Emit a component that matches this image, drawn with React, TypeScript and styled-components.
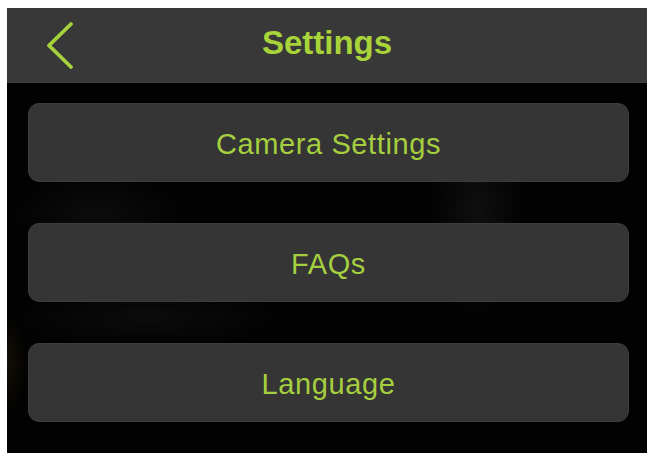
import React from 'react';
import styled, { createGlobalStyle } from 'styled-components';

const items = ['Camera Settings', 'FAQs', 'Language'];

const App = () => {
  return (
    <>
      <GlobalStyle />
      <Screen>
        <Header>
          <BackButton type="button" aria-label="Back">
            <svg width="30" height="48" viewBox="0 0 30 48" fill="none">
              <path
                d="M26 3 L4 24.5 L26 46"
                stroke="#a6d23c"
                strokeWidth="3.8"
                strokeLinecap="round"
                strokeLinejoin="round"
              />
            </svg>
          </BackButton>
          <Title>Settings</Title>
        </Header>
        <Content>
          {items.map((item) => (
            <MenuButton key={item} type="button">
              {item}
            </MenuButton>
          ))}
        </Content>
      </Screen>
    </>
  );
};

const GlobalStyle = createGlobalStyle`
  body {
    margin: 0;
    background: #ffffff;
    font-family: 'Liberation Sans', Arial, sans-serif;
  }
`;

const Screen = styled.div`
  margin: 8px 0 0 7px;
  width: 640px;
  height: 445px;
  display: flex;
  flex-direction: column;
  background:
    radial-gradient(ellipse 20px 50px at 0px 355px, rgba(90, 70, 20, 0.2), transparent),
    radial-gradient(ellipse 140px 30px at 140px 310px, rgba(255, 255, 255, 0.04), transparent),
    radial-gradient(ellipse 50px 110px at 470px 205px, rgba(255, 255, 255, 0.05), transparent),
    radial-gradient(ellipse 90px 40px at 90px 205px, rgba(255, 255, 255, 0.04), transparent),
    #020202;
  overflow: hidden;
`;

const Header = styled.header`
  position: relative;
  height: 74px;
  flex-shrink: 0;
  background: #383838;
  border-bottom: 1px solid #3f3f3f;
  display: flex;
  align-items: center;
  justify-content: center;
`;

const BackButton = styled.button`
  position: absolute;
  left: 38px;
  top: 13px;
  padding: 0;
  border: none;
  background: transparent;
  display: flex;
  cursor: pointer;
`;

const Title = styled.h1`
  margin: 0 0 4px 0;
  font-size: 33px;
  font-weight: 700;
  color: #a8d43a;
`;

const Content = styled.div`
  display: flex;
  flex-direction: column;
  gap: 41px;
  padding: 20px 18px 0 21px;
`;

const MenuButton = styled.button`
  height: 79px;
  padding: 4px 0 0 0;
  border-radius: 11px;
  border: 1px solid #3d3d3d;
  background: #353535;
  color: #a6cf3f;
  font-family: 'Liberation Sans', Arial, sans-serif;
  font-size: 29px;
  letter-spacing: 0.6px;
  cursor: pointer;
`;

export default App;
